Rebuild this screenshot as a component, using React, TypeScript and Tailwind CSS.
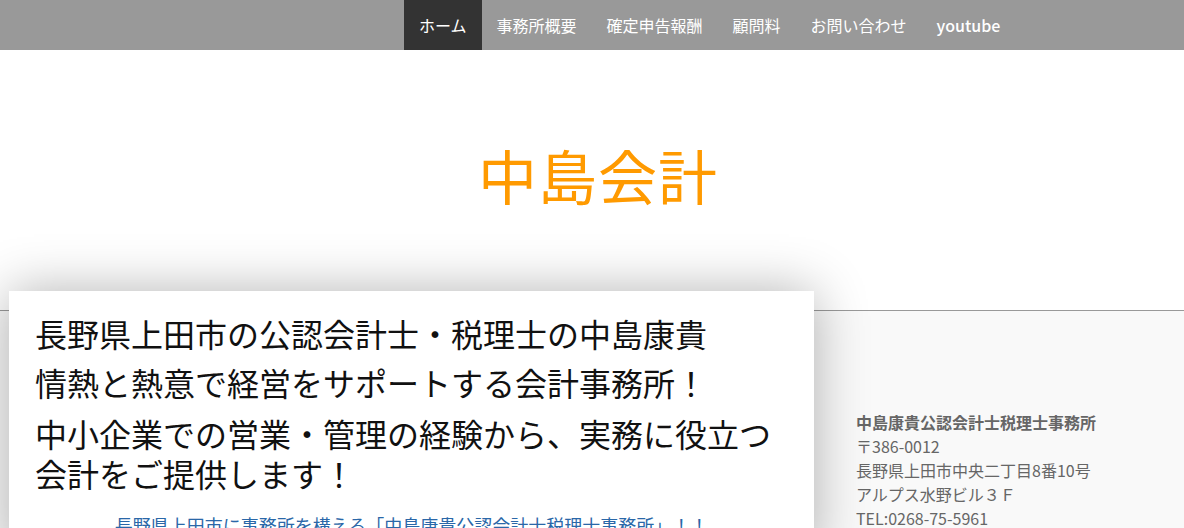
const navItems = ["ホーム", "事務所概要", "確定申告報酬", "顧問料", "お問い合わせ", "youtube"];

const jpFont = { fontFamily: '"Noto Sans CJK JP", "Noto Sans", sans-serif' };

function NavBar() {
	return (
		<nav className="h-[50px] bg-[#999999] flex pl-[404px]">
			{navItems.map((item, i) =>
				<a
					key={item}
					className={`h-full flex items-center px-[15px] text-[16px] text-white ${i === 0 ? "bg-[#333333]" : ""} ${item === "youtube" ? "font-medium" : ""}`}
				>
					{item}
				</a>)}
		</nav>
	);
}

function Header() {
	return (
		<header className="h-[261px] bg-white border-b border-[#999999] flex items-center justify-center pl-[12px]">
			<h1 className="text-[59px] leading-none text-[#ff9a00] tracking-[1px] mt-[-12px]">中島会計</h1>
		</header>
	);
}

function MainCard() {
	return (
		<div className="w-[805px] -mt-[20px] bg-white shadow-[0_0_50px_rgba(0,0,0,0.3)] pt-[22px] pl-[26px] pr-[26px] pb-[20px] relative">
			<p className="text-[32px] leading-[40px] text-[#111111] mb-[9px]">長野県上田市の公認会計士・税理士の中島康貴</p>
			<p className="text-[32px] leading-[40px] text-[#111111] mb-[11px]">情熱と熱意で経営をサポートする会計事務所！</p>
			<p className="text-[32px] leading-[40px] text-[#111111]">中小企業での営業・管理の経験から、実務に役立つ会計をご提供します！</p>
			<p className="mt-[20px] text-center text-[18px] leading-[24px] text-[#2a67a8]">長野県上田市に事務所を構える「中島康貴公認会計士税理士事務所」！！</p>
		</div>
	);
}

function SideInfo() {
	return (
		<div className="pt-[99px] text-[16px] leading-[24px] text-[#666666]">
			<p className="font-bold">中島康貴公認会計士税理士事務所</p>
			<p>〒386-0012</p>
			<p>長野県上田市中央二丁目8番10号</p>
			<p>アルプス水野ビル３Ｆ</p>
			<p>TEL:0268-75-5961</p>
		</div>
	);
}

export default function App() {
	return (
		<div className="w-[1184px] h-[528px] overflow-hidden bg-[#f9f9f9]" style={jpFont}>
			<NavBar />
			<Header />
			<div className="flex items-start pl-[9px] gap-[42px]">
				<MainCard />
				<SideInfo />
			</div>
		</div>
	);
}
